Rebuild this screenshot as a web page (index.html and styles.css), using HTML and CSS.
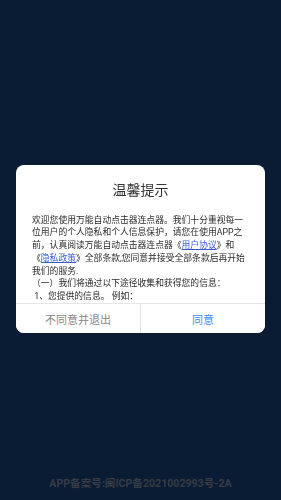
FILE: index.html
```html
<!DOCTYPE html>
<html lang="zh-CN">
<head>
<meta charset="utf-8">
<title>温馨提示</title>
<link rel="stylesheet" href="styles.css">
</head>
<body>
<div class="page">
  <div class="footer">APP备案号:闽ICP备2021002993号-2A</div>
</div>
<div class="mask">
  <div class="dialog">
    <div class="title">温馨提示</div>
    <div class="content">
      <p>欢迎您使用万能自动点击器连点器。我们十分重视每一位用户的个人隐私和个人信息保护，请您在使用APP之前，认真阅读万能自动点击器连点器《<a class="link" href="#">用户协议</a>》和《<a class="link" href="#">隐私政策</a>》全部条款,您同意并接受全部条款后再开始我们的服务.</p>
      <p>（一）我们将通过以下途径收集和获得您的信息：</p>
      <p>&nbsp;1、您提供的信息。 例如：</p>
    </div>
    <div class="actions">
      <button class="btn btn-cancel">不同意并退出</button>
      <button class="btn btn-ok">同意</button>
    </div>
  </div>
</div>
</body>
</html>
```
FILE: styles.css
```css
html, body {
  margin: 0;
  padding: 0;
}
body {
  background: #0a1b34;
  font-family: Roboto, "Noto Sans CJK SC", sans-serif;
  width: 281px;
  height: 500px;
  overflow: hidden;
}
.page {
  height: 500px;
  display: flex;
  flex-direction: column;
  justify-content: flex-end;
  align-items: center;
}
.footer {
  font-size: 10.6px;
  line-height: 14px;
  font-weight: 700;
  color: #383c45;
  padding-bottom: 9px;
  white-space: nowrap;
}
.mask {
  position: fixed;
  inset: 0;
  display: flex;
  align-items: center;
  justify-content: center;
}
.dialog {
  width: 249px;
  height: 168px;
  margin-top: -2px;
  background: #fff;
  border-radius: 8px;
  display: flex;
  flex-direction: column;
  overflow: hidden;
}
.title {
  padding-top: 15px;
  font-size: 14px;
  line-height: 20px;
  color: #333;
  text-align: center;
}
.content {
  margin-top: 13.6px;
  padding: 0 16px 0 16px;
  flex: 1;
  overflow: hidden;
  font-size: 8.8px;
  line-height: 12.75px;
  color: #2b2b2b;
}
.content p {
  margin: 0;
}
.link {
  color: #3a5bd9;
  text-decoration: underline;
}
.actions {
  height: 29px;
  border-top: 1px solid #e6e6e6;
  display: flex;
}
.btn {
  flex: 1;
  border: 0;
  background: #fff;
  font-family: Roboto, "Noto Sans CJK SC", sans-serif;
  font-size: 11px;
  padding: 0;
  margin: 0;
}
.btn-cancel {
  color: #888;
  border-right: 1px solid #e0e0e0;
}
.btn-ok {
  color: #3b8ef0;
}
```
